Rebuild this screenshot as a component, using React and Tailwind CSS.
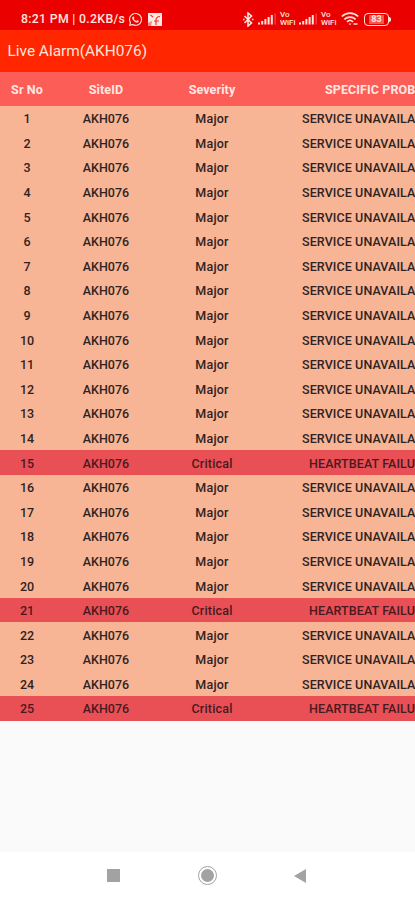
import { FaWhatsapp } from 'react-icons/fa'

const CRITICAL_ROWS = [15, 21, 25]

const alarms = Array.from({ length: 25 }, (_, i) => {
  const critical = CRITICAL_ROWS.includes(i + 1)
  return {
    id: i + 1,
    site: 'AKH076',
    severity: critical ? 'Critical' : 'Major',
    problem: critical ? 'HEARTBEAT FAILURE' : 'SERVICE UNAVAILABLE',
    critical,
  }
})

function Signal() {
  return (
    <svg width="18" height="12" viewBox="0 0 18 12" fill="#ffe4de" className="shrink-0">
      <rect x="0" y="9.5" width="2" height="2" />
      <rect x="3.2" y="8" width="2" height="3.5" />
      <rect x="6.4" y="6" width="2" height="5.5" />
      <rect x="9.6" y="4" width="2" height="7.5" />
      <rect x="12.8" y="2" width="2" height="9.5" />
      <rect x="16.6" y="0.5" width="1" height="11" opacity="0.4" />
    </svg>
  )
}

function VoWifi() {
  return (
    <div className="w-[17px] shrink-0 text-[8px] leading-[8px] font-medium whitespace-nowrap">
      <div>Vo</div>
      <div>WiFi</div>
    </div>
  )
}

function StatusBar() {
  return (
    <div className="flex h-[30px] items-center bg-[#eb0000] pt-[8px] pl-[21px] text-[#ffe4de]">
      <span className="w-[107px] text-[12.3px] font-medium tracking-[0.3px] whitespace-nowrap">8:21 PM | 0.2KB/s</span>
      <FaWhatsapp className="size-[15px] shrink-0" />
      <svg width="14" height="13" viewBox="0 0 14 13" className="ml-[5px] shrink-0">
        <path d="M0 0h14v13H0z" fill="#ffe9e4" />
        <path d="M2.5 2l2.5 2M8 12V7.5C8 5 9 3.5 12 3.5M6 8h5" fill="none" stroke="#e63a2c" strokeWidth="1.2" />
        <path d="M0 10l4-2-1 5H0z" fill="#f2867a" />
      </svg>
      <svg width="11" height="15" viewBox="0 0 11 15" fill="none" stroke="#ffe4de" strokeWidth="1.6" className="ml-[81px] shrink-0">
        <path d="M1.5 4l7 7-3.5 3V1l3.5 3-7 7" />
        <path d="M0 7.5h1.5M9 7.5h1.5" />
      </svg>
      <div className="ml-[4px] flex items-center">
        <Signal />
        <span className="w-[4px]" />
        <VoWifi />
        <span className="w-[2px]" />
        <Signal />
        <span className="w-[4px]" />
        <VoWifi />
      </div>
      <svg width="18" height="14" viewBox="0 0 18 14" fill="none" stroke="#ffe4de" strokeWidth="1.7" className="ml-[3px] shrink-0">
        <path d="M0.8 4.5C5.5 0 12.5 0 17.2 4.5" />
        <path d="M3.4 7.3c3.2-3 8-3 11.2 0" />
        <path d="M6 9.8c1.8-1.6 4.2-1.6 6 0" />
        <path d="M7.5 11.5h3L9 13.3z" fill="#ffe4de" stroke="none" />
        <path d="M12.5 12h4" strokeWidth="1.5" />
      </svg>
      <div className="ml-[5px] flex h-[13px] w-[25px] shrink-0 items-center justify-center rounded-[4px] border-[1.5px] border-[#ffe4de] text-[9px] leading-none font-bold">
        <span className="bg-[#ef5a50] px-[2px]">83</span>
      </div>
      <span className="h-[5px] w-[2px] shrink-0 rounded-r-sm bg-[#ffe4de]" />
    </div>
  )
}

function TableRow({ alarm }) {
  return (
    <div
      className={`grid h-[24.6px] grid-cols-[54px_104px_108px_1fr] items-center pt-[2.6px] text-center text-[12.5px] font-medium whitespace-nowrap ${
        alarm.critical ? 'bg-[#e85056] text-[#4a191e]' : 'bg-[#f7b596] text-[#30231f]'
      }`}
    >
      <span>{alarm.id}</span>
      <span>{alarm.site}</span>
      <span className="tracking-[0.2px]">{alarm.severity}</span>
      <span className={`text-left tracking-[0.1px] ${alarm.critical ? 'pl-[43px]' : 'pl-[36px]'}`}>
        {alarm.problem}
      </span>
    </div>
  )
}

function App() {
  return (
    <div className="flex h-[900px] w-[415px] flex-col overflow-hidden bg-[#fafafa] font-[Roboto,sans-serif]">
      <StatusBar />
      <header className="flex h-[42px] items-center bg-[#ff2600] pt-[2px] pl-[7.5px] text-[15.4px] text-[#ffe4dc]">
        Live Alarm(AKH076)
      </header>
      <div className="grid h-[34px] shrink-0 grid-cols-[54px_104px_108px_1fr] items-center bg-[#fc5d56] pt-[3px] text-center text-[12.5px] font-bold tracking-[0.1px] whitespace-nowrap text-[#ffe8e3]">
        <span>Sr No</span>
        <span>SiteID</span>
        <span>Severity</span>
        <span className="pl-[59px] text-left">SPECIFIC PROBLEM</span>
      </div>
      <div className="overflow-hidden">
        {alarms.map((alarm) => (
          <TableRow key={alarm.id} alarm={alarm} />
        ))}
      </div>
      <nav className="mt-auto flex h-[48px] shrink-0 items-center bg-white pb-[1px] pl-[107px]">
        <span className="size-[13px] bg-[#a2a2a2]" />
        <span className="ml-[78px] flex size-[19px] items-center justify-center rounded-full border-[1.5px] border-[#a2a2a2]">
          <span className="size-[13px] rounded-full bg-[#a2a2a2]" />
        </span>
        <svg width="12" height="14" viewBox="0 0 12 14" fill="#a2a2a2" className="ml-[77px]">
          <path d="M12 0v14L0 7z" />
        </svg>
      </nav>
    </div>
  )
}

export default App
